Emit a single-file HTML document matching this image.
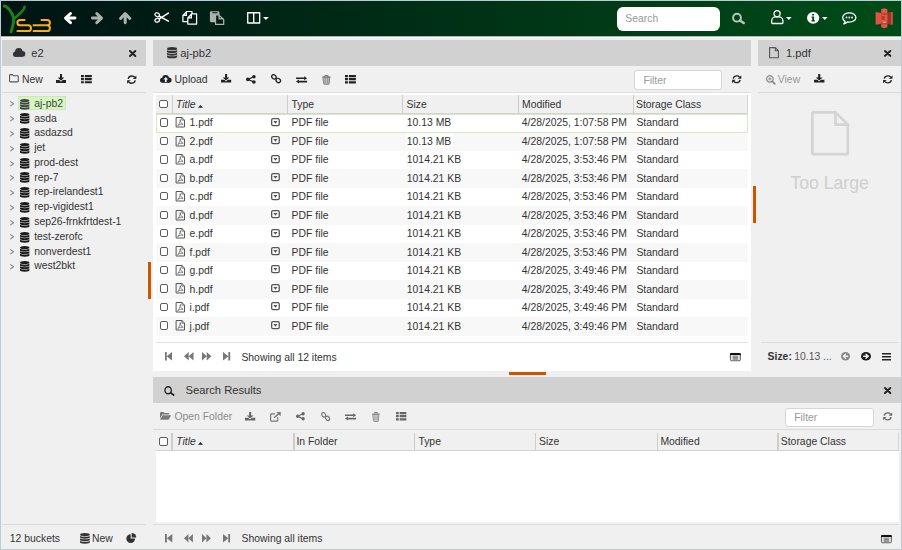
<!DOCTYPE html>
<html><head><meta charset="utf-8">
<style>
*{box-sizing:border-box;margin:0;padding:0}
html,body{width:902px;height:550px;overflow:hidden;background:#f0f0f0}
body{position:relative;font-family:"Liberation Sans",sans-serif;font-size:10.4px;color:#333}
.a{position:absolute}
.t{position:absolute;white-space:nowrap;line-height:12px}
svg{position:absolute;overflow:visible}
.cb{position:absolute;width:8.5px;height:8.4px;border:1px solid #5a5a5a;border-radius:2px;background:#fff}
</style></head><body>
<div class="a" style="left:1px;top:1px;width:900px;height:35px;background:linear-gradient(90deg,#001414 0%,#001614 6%,#001b14 16%,#002615 32%,#003a16 66%,#004c18 100%)"></div>
<div class="a" style="left:1px;top:36px;width:900px;height:1px;background:linear-gradient(90deg,#001414 0%,#001614 6%,#001b14 16%,#002615 32%,#003a16 66%,#004c18 100%);opacity:.3"></div>
<div class="a" style="left:1px;top:37px;width:900px;height:1px;background:#f8f8f8"></div>
<svg style="left:0px;top:0px;" width="52" height="34" viewBox="0 0 52 34" preserveAspectRatio="none" fill="#333" stroke="none"><path d="M4.3 6.1 C7.6 6.6 11.6 11.2 13.5 17.6 C14.3 21 12.6 27.2 11.1 31.8" fill="none" stroke="#188218" stroke-width="3.0" stroke-linecap="round" stroke-linejoin="round" /><path d="M24.6 6.8 C24.5 10.6 19.2 14.2 13.9 18.9" fill="none" stroke="#188218" stroke-width="2.6" stroke-linecap="round" stroke-linejoin="round" /><path d="M24.6 20 H20.2 C18.2 20 17.4 21 17.4 22.65 C17.4 24.3 18.2 25.3 20.2 25.3 H28.2 C30.2 25.3 31 26.3 31 28.2 C31 30.1 30.2 31.1 28.2 31.1 H17.4" fill="none" stroke="#f9ae1a" stroke-width="2.0" stroke-linecap="round" stroke-linejoin="round" /><path d="M41.5 20 H47.1 C49.1 20 49.9 21 49.9 22.65 C49.9 24.3 49.1 25.3 47.1 25.3 H33.5 M47.1 25.3 C49.1 25.3 49.9 26.3 49.9 28.2 C49.9 30.1 49.1 31.1 47.1 31.1 H33.5" fill="none" stroke="#f9ae1a" stroke-width="2.0" stroke-linecap="round" stroke-linejoin="round" /></svg>
<svg style="left:64.3px;top:11.8px;" width="12.4" height="12.2" viewBox="0 0 12 12" preserveAspectRatio="none" fill="#333" stroke="none"><path d="M6.3 1.5 L1.5 6 L6.3 10.5 M1.8 6 H10.6" fill="none" stroke="#ffffff" stroke-width="2.9" stroke-linecap="round" stroke-linejoin="round" /></svg>
<svg style="left:91.4px;top:11.8px;" width="12.1" height="12.2" viewBox="0 0 12 12" preserveAspectRatio="none" fill="#333" stroke="none"><path d="M5.7 1.5 L10.5 6 L5.7 10.5 M10.2 6 H1.4" fill="none" stroke="#aab3ae" stroke-width="2.9" stroke-linecap="round" stroke-linejoin="round" /></svg>
<svg style="left:118.9px;top:11.6px;" width="12.4" height="12.2" viewBox="0 0 12 12" preserveAspectRatio="none" fill="#333" stroke="none"><path d="M1.5 6.3 L6 1.5 L10.5 6.3 M6 1.8 V10.6" fill="none" stroke="#aab3ae" stroke-width="2.9" stroke-linecap="round" stroke-linejoin="round" /></svg>
<svg style="left:154.4px;top:12.2px;" width="14.8" height="10.8" viewBox="0 0 15 11" preserveAspectRatio="none" fill="#333" stroke="none"><ellipse cx="3.3" cy="2.8" rx="2.4" ry="1.9" transform="rotate(25 3.3 2.8)" fill="none" stroke="#ffffff" stroke-width="1.3"/><ellipse cx="3.3" cy="8.4" rx="2.4" ry="1.9" transform="rotate(-25 3.3 8.4)" fill="none" stroke="#ffffff" stroke-width="1.3"/><path d="M5.3 4.1 L14.6 9.4 M5.3 7.1 L14.6 1.1" fill="none" stroke="#ffffff" stroke-width="1.5" stroke-linecap="round" stroke-linejoin="round" /></svg>
<svg style="left:181.7px;top:10.5px;" width="15.2" height="13.2" viewBox="0 0 15.2 13.2" preserveAspectRatio="none" fill="#333" stroke="none"><path d="M0.9 4.5 L4.8 0.5 H10 V2.8 M0.9 4.5 V10.6 H5.8 M0.9 4.5 H4.4 V0.8" fill="none" stroke="#ffffff" stroke-width="1.25" stroke-linecap="round" stroke-linejoin="round" /><path d="M5.8 7 L9.8 2.8 H14.6 V13.1 H5.8 Z" fill="#001a10" /><path d="M5.8 7 L9.8 2.8 H14.6 V13.1 H5.8 Z M5.8 7 H9.4 V3.1" fill="none" stroke="#ffffff" stroke-width="1.25" stroke-linecap="round" stroke-linejoin="round" /></svg>
<svg style="left:209.0px;top:10.5px;" width="15.3" height="13.2" viewBox="0 0 15.2 13.2" preserveAspectRatio="none" fill="#333" stroke="none"><rect x="0.9" y="0.3" width="9.5" height="10.9" rx="1.1" fill="#aab3ae"/><rect x="3.2" y="1.3" width="5.3" height="1.0" rx="0.5" fill="#001b10"/><path d="M6.5 4 H9.6 L14.6 8.5 V13.5 H6.5 Z" fill="#001b10" /><path d="M6.5 4 H9.6 L14.6 8.5 V13.5 H6.5 Z M10 4.3 V7.9 H14.3" fill="none" stroke="#aab3ae" stroke-width="1.25" stroke-linecap="round" stroke-linejoin="round" /></svg>
<svg style="left:246.6px;top:11.5px;" width="13.4" height="11.7" viewBox="0 0 14 12" preserveAspectRatio="none" fill="#333" stroke="none"><path d="M0.75 0.75 H13.25 V11.25 H0.75 Z M7 0.75 V11.25" fill="none" stroke="#ffffff" stroke-width="1.4" stroke-linecap="butt" stroke-linejoin="round" /></svg>
<svg style="left:263.4px;top:16.9px;" width="5.8" height="2.9" viewBox="0 0 6 3.2" preserveAspectRatio="none" fill="#333" stroke="none"><path d="M0 0 H6 L3 3.2 Z" fill="#ffffff" /></svg>
<div class="a" style="left:617px;top:7px;width:103px;height:23.5px;background:#fff;border-radius:6px"></div>
<div class="t" style="left:625.3px;top:13.3px;color:#999;">Search</div>
<svg style="left:732.2px;top:13.3px;" width="12.8" height="10.8" viewBox="0 0 12.8 10.8" preserveAspectRatio="none" fill="#333" stroke="none"><circle cx="5" cy="4.7" r="3.9" fill="none" stroke="#b5c7ba" stroke-width="2.0"/><path d="M7.9 7.5 L11.7 10" fill="none" stroke="#b5c7ba" stroke-width="2.5" stroke-linecap="round" stroke-linejoin="round" /></svg>
<svg style="left:770.7px;top:10.2px;" width="12.9" height="14.2" viewBox="0 0 13 14.2" preserveAspectRatio="none" fill="#333" stroke="none"><circle cx="6.1" cy="3.7" r="3.1" fill="none" stroke="#ffffff" stroke-width="1.3"/><path d="M1.4 13.5 Q0.7 13.5 0.7 12.8 V10.9 C0.7 8.4 2.7 6.9 4.6 6.9 H7.8 C9.8 6.9 12 8.4 12 10.9 V12.8 Q12 13.5 11.3 13.5 Z" fill="none" stroke="#ffffff" stroke-width="1.3" stroke-linecap="round" stroke-linejoin="round" /></svg>
<svg style="left:786.2px;top:17.3px;" width="5.6" height="2.9" viewBox="0 0 6 3.2" preserveAspectRatio="none" fill="#333" stroke="none"><path d="M0 0 H6 L3 3.2 Z" fill="#ffffff" /></svg>
<svg style="left:806.5px;top:11.6px;" width="12.3" height="11.7" viewBox="0 0 12.6 11.8" preserveAspectRatio="none" fill="#333" stroke="none"><ellipse cx="6.3" cy="5.9" rx="6.3" ry="5.9" fill="#ffffff"/><path d="M5.3 1.9 H7.2 V3.6 H5.3 Z M4.6 4.6 H7.3 V8.4 H8.1 V9.7 H4.6 V8.4 H5.4 V5.9 H4.6 Z" fill="#004316" /></svg>
<svg style="left:822.4px;top:17.0px;" width="5.6" height="2.9" viewBox="0 0 6 3.2" preserveAspectRatio="none" fill="#333" stroke="none"><path d="M0 0 H6 L3 3.2 Z" fill="#ffffff" /></svg>
<svg style="left:842.2px;top:11.8px;" width="14.6" height="12.6" viewBox="0 0 14.6 12.6" preserveAspectRatio="none" fill="#333" stroke="none"><path d="M7.3 0.8 C11 0.8 13.9 2.9 13.9 5.5 C13.9 8.1 11 10.2 7.3 10.2 C6.6 10.2 6 10.1 5.4 10 C4.5 10.9 3.3 11.6 1.8 11.9 C2.5 11.1 2.9 10.3 3 9.4 C1.6 8.5 0.7 7.1 0.7 5.5 C0.7 2.9 3.6 0.8 7.3 0.8 Z" fill="none" stroke="#ffffff" stroke-width="1.3" stroke-linecap="round" stroke-linejoin="round" /><circle cx="4.5" cy="5.5" r="0.9" fill="#ffffff"/><circle cx="7.3" cy="5.5" r="0.9" fill="#ffffff"/><circle cx="10.1" cy="5.5" r="0.9" fill="#ffffff"/></svg>
<svg style="left:874.6px;top:8.2px;" width="18.4" height="20.6" viewBox="0 0 18.4 20.6" preserveAspectRatio="none" fill="#333" stroke="none"><path d="M0.6 3.9 L6.5 4.9 V15.7 L0.6 16.7 Z" fill="#e05243" /><path d="M17.8 3.9 L12.2 4.9 V15.7 L17.8 16.7 Z" fill="#e05243" /><path d="M12.2 4.9 L16.1 4.2 V16.4 L12.2 15.7 Z" fill="#9b3527" /><path d="M6.2 1.3 L9.3 0.2 L12.4 1.3 V19.3 L9.3 20.3 L6.2 19.3 Z" fill="#e35646" /><path d="M6.2 4.9 L9.3 5.5 L12.4 4.9 V6.5 L9.3 7.1 L6.2 6.5 Z" fill="#b5402f" /><path d="M6.9 8.2 H9.6 V11.6 H6.9 Z" fill="#a5392b" /><path d="M6.2 14.6 L9.3 14.0 L12.4 14.6 V15.9 L9.3 16.5 L6.2 15.9 Z" fill="#b5402f" /><path d="M7.0 14.3 L9.3 13.8 L11.6 14.3 L9.3 14.9 Z" fill="#f3cfc6" /></svg>
<div class="a" style="left:2px;top:40px;width:144px;height:26px;background:#d1d1d1;"></div>
<svg style="left:13.1px;top:48.0px;" width="12.3" height="8.9" viewBox="0 0 12.3 8.9" preserveAspectRatio="none" fill="#333" stroke="none"><circle cx="5.8" cy="3.9" r="3.8" fill="#333"/><circle cx="9.5" cy="5.9" r="2.8" fill="#333"/><circle cx="2.7" cy="6.2" r="2.7" fill="#333"/><path d="M2.7 4.5 H9.5 V8.9 H2.7 Z" fill="#333" /></svg>
<div class="t" style="left:31.3px;top:47px;font-size:11.2px;line-height:12px;">e2</div>
<svg style="left:128.5px;top:50.0px;" width="7.3" height="7.0" viewBox="0 0 7.3 7" preserveAspectRatio="none" fill="#333" stroke="none"><path d="M1 1 L6.3 6 M6.3 1 L1 6" fill="none" stroke="#222" stroke-width="2.0" stroke-linecap="round" stroke-linejoin="round" /></svg>
<svg style="left:9.2px;top:74.4px;" width="9.9" height="8.5" viewBox="0 0 10 8.5" preserveAspectRatio="none" fill="#333" stroke="none"><path d="M0.6 1.4 Q0.6 0.6 1.4 0.6 H3.6 L4.6 1.8 H8.6 Q9.4 1.8 9.4 2.6 V7.1 Q9.4 7.9 8.6 7.9 H1.4 Q0.6 7.9 0.6 7.1 Z" fill="none" stroke="#555" stroke-width="1.1" stroke-linecap="round" stroke-linejoin="round" /></svg>
<div class="t" style="left:22.0px;top:74px;">New</div>
<svg style="left:56.1px;top:74.0px;" width="10.0" height="8.9" viewBox="0 0 10 9" preserveAspectRatio="none" fill="#333" stroke="none"><path d="M4 0 H6 V3.6 H8.3 L5 6.9 L1.7 3.6 H4 Z" fill="#222" /><path d="M0 6.1 H3.2 L5 7.9 L6.8 6.1 H10 V9 H0 Z" fill="#222" /></svg>
<svg style="left:81.0px;top:74.5px;" width="10.8" height="8.3" viewBox="0 0 11 8.5" preserveAspectRatio="none" fill="#333" stroke="none"><path d="M0 0 H2.9 V2.2 H0 Z M3.9 0 H11 V2.2 H3.9 Z" fill="#222" /><path d="M0 3.15 H2.9 V5.35 H0 Z M3.9 3.15 H11 V5.35 H3.9 Z" fill="#222" /><path d="M0 6.3 H2.9 V8.5 H0 Z M3.9 6.3 H11 V8.5 H3.9 Z" fill="#222" /></svg>
<svg style="left:127.0px;top:74.6px;" width="9.5" height="9.2" viewBox="0 0 9.6 9.4" preserveAspectRatio="none" fill="#333" stroke="none"><path d="M1.2 3.9 C1.7 2.1 3.2 1.0 4.9 1.0 C6.1 1.0 7.1 1.5 7.8 2.3" fill="none" stroke="#222" stroke-width="1.4" stroke-linecap="butt" stroke-linejoin="round" /><path d="M9.5 0.5 V4.1 H5.9 Z" fill="#222" /><path d="M8.4 5.5 C7.9 7.3 6.4 8.4 4.7 8.4 C3.5 8.4 2.5 7.9 1.8 7.1" fill="none" stroke="#222" stroke-width="1.4" stroke-linecap="butt" stroke-linejoin="round" /><path d="M0.1 8.9 V5.3 H3.7 Z" fill="#222" /></svg>
<div class="a" style="left:2px;top:91.5px;width:144px;height:1.5px;background:#dadada;"></div>
<div class="a" style="left:18.2px;top:96.0px;width:47.6px;height:14.2px;background:#d5f6c1;border:1px solid #c9eab5"></div>
<svg style="left:9.8px;top:101.39999999999999px;" width="4.2" height="5.5" viewBox="0 0 4.2 5.3" preserveAspectRatio="none" fill="#333" stroke="none"><path d="M0.6 0.6 L3.6 2.65 L0.6 4.7" fill="none" stroke="#888" stroke-width="1.1" stroke-linecap="round" stroke-linejoin="round" /></svg>
<svg style="left:19.7px;top:98.5px;" width="9.4" height="10.6" viewBox="0 0 10 11.0" preserveAspectRatio="none" fill="#333" stroke="none"><ellipse cx="5" cy="1.65" rx="5" ry="1.65" fill="#444"/><path d="M0 2.45 A5 1.5 0 0 0 10 2.45 V4.40 A5 1.5 0 0 1 0 4.40 Z" fill="#444" /><path d="M0 5.05 A5 1.5 0 0 0 10 5.05 V7.00 A5 1.5 0 0 1 0 7.00 Z" fill="#444" /><path d="M0 7.65 A5 1.5 0 0 0 10 7.65 V9.60 A5 1.5 0 0 1 0 9.60 Z" fill="#444" /></svg>
<div class="t" style="left:34.2px;top:98px;color:#444;">aj-pb2</div>
<svg style="left:9.8px;top:116.17999999999999px;" width="4.2" height="5.5" viewBox="0 0 4.2 5.3" preserveAspectRatio="none" fill="#333" stroke="none"><path d="M0.6 0.6 L3.6 2.65 L0.6 4.7" fill="none" stroke="#888" stroke-width="1.1" stroke-linecap="round" stroke-linejoin="round" /></svg>
<svg style="left:19.7px;top:113.28px;" width="9.4" height="10.6" viewBox="0 0 10 11.0" preserveAspectRatio="none" fill="#333" stroke="none"><ellipse cx="5" cy="1.65" rx="5" ry="1.65" fill="#1a1a1a"/><path d="M0 2.45 A5 1.5 0 0 0 10 2.45 V4.40 A5 1.5 0 0 1 0 4.40 Z" fill="#1a1a1a" /><path d="M0 5.05 A5 1.5 0 0 0 10 5.05 V7.00 A5 1.5 0 0 1 0 7.00 Z" fill="#1a1a1a" /><path d="M0 7.65 A5 1.5 0 0 0 10 7.65 V9.60 A5 1.5 0 0 1 0 9.60 Z" fill="#1a1a1a" /></svg>
<div class="t" style="left:34.2px;top:113px;color:#333;">asda</div>
<svg style="left:9.8px;top:130.95999999999998px;" width="4.2" height="5.5" viewBox="0 0 4.2 5.3" preserveAspectRatio="none" fill="#333" stroke="none"><path d="M0.6 0.6 L3.6 2.65 L0.6 4.7" fill="none" stroke="#888" stroke-width="1.1" stroke-linecap="round" stroke-linejoin="round" /></svg>
<svg style="left:19.7px;top:128.05999999999997px;" width="9.4" height="10.6" viewBox="0 0 10 11.0" preserveAspectRatio="none" fill="#333" stroke="none"><ellipse cx="5" cy="1.65" rx="5" ry="1.65" fill="#1a1a1a"/><path d="M0 2.45 A5 1.5 0 0 0 10 2.45 V4.40 A5 1.5 0 0 1 0 4.40 Z" fill="#1a1a1a" /><path d="M0 5.05 A5 1.5 0 0 0 10 5.05 V7.00 A5 1.5 0 0 1 0 7.00 Z" fill="#1a1a1a" /><path d="M0 7.65 A5 1.5 0 0 0 10 7.65 V9.60 A5 1.5 0 0 1 0 9.60 Z" fill="#1a1a1a" /></svg>
<div class="t" style="left:34.2px;top:127px;color:#333;">asdazsd</div>
<svg style="left:9.8px;top:145.73999999999998px;" width="4.2" height="5.5" viewBox="0 0 4.2 5.3" preserveAspectRatio="none" fill="#333" stroke="none"><path d="M0.6 0.6 L3.6 2.65 L0.6 4.7" fill="none" stroke="#888" stroke-width="1.1" stroke-linecap="round" stroke-linejoin="round" /></svg>
<svg style="left:19.7px;top:142.83999999999997px;" width="9.4" height="10.6" viewBox="0 0 10 11.0" preserveAspectRatio="none" fill="#333" stroke="none"><ellipse cx="5" cy="1.65" rx="5" ry="1.65" fill="#1a1a1a"/><path d="M0 2.45 A5 1.5 0 0 0 10 2.45 V4.40 A5 1.5 0 0 1 0 4.40 Z" fill="#1a1a1a" /><path d="M0 5.05 A5 1.5 0 0 0 10 5.05 V7.00 A5 1.5 0 0 1 0 7.00 Z" fill="#1a1a1a" /><path d="M0 7.65 A5 1.5 0 0 0 10 7.65 V9.60 A5 1.5 0 0 1 0 9.60 Z" fill="#1a1a1a" /></svg>
<div class="t" style="left:34.2px;top:142px;color:#333;">jet</div>
<svg style="left:9.8px;top:160.51999999999998px;" width="4.2" height="5.5" viewBox="0 0 4.2 5.3" preserveAspectRatio="none" fill="#333" stroke="none"><path d="M0.6 0.6 L3.6 2.65 L0.6 4.7" fill="none" stroke="#888" stroke-width="1.1" stroke-linecap="round" stroke-linejoin="round" /></svg>
<svg style="left:19.7px;top:157.61999999999998px;" width="9.4" height="10.6" viewBox="0 0 10 11.0" preserveAspectRatio="none" fill="#333" stroke="none"><ellipse cx="5" cy="1.65" rx="5" ry="1.65" fill="#1a1a1a"/><path d="M0 2.45 A5 1.5 0 0 0 10 2.45 V4.40 A5 1.5 0 0 1 0 4.40 Z" fill="#1a1a1a" /><path d="M0 5.05 A5 1.5 0 0 0 10 5.05 V7.00 A5 1.5 0 0 1 0 7.00 Z" fill="#1a1a1a" /><path d="M0 7.65 A5 1.5 0 0 0 10 7.65 V9.60 A5 1.5 0 0 1 0 9.60 Z" fill="#1a1a1a" /></svg>
<div class="t" style="left:34.2px;top:157px;color:#333;">prod-dest</div>
<svg style="left:9.8px;top:175.29999999999998px;" width="4.2" height="5.5" viewBox="0 0 4.2 5.3" preserveAspectRatio="none" fill="#333" stroke="none"><path d="M0.6 0.6 L3.6 2.65 L0.6 4.7" fill="none" stroke="#888" stroke-width="1.1" stroke-linecap="round" stroke-linejoin="round" /></svg>
<svg style="left:19.7px;top:172.39999999999998px;" width="9.4" height="10.6" viewBox="0 0 10 11.0" preserveAspectRatio="none" fill="#333" stroke="none"><ellipse cx="5" cy="1.65" rx="5" ry="1.65" fill="#1a1a1a"/><path d="M0 2.45 A5 1.5 0 0 0 10 2.45 V4.40 A5 1.5 0 0 1 0 4.40 Z" fill="#1a1a1a" /><path d="M0 5.05 A5 1.5 0 0 0 10 5.05 V7.00 A5 1.5 0 0 1 0 7.00 Z" fill="#1a1a1a" /><path d="M0 7.65 A5 1.5 0 0 0 10 7.65 V9.60 A5 1.5 0 0 1 0 9.60 Z" fill="#1a1a1a" /></svg>
<div class="t" style="left:34.2px;top:172px;color:#333;">rep-7</div>
<svg style="left:9.8px;top:190.07999999999998px;" width="4.2" height="5.5" viewBox="0 0 4.2 5.3" preserveAspectRatio="none" fill="#333" stroke="none"><path d="M0.6 0.6 L3.6 2.65 L0.6 4.7" fill="none" stroke="#888" stroke-width="1.1" stroke-linecap="round" stroke-linejoin="round" /></svg>
<svg style="left:19.7px;top:187.17999999999998px;" width="9.4" height="10.6" viewBox="0 0 10 11.0" preserveAspectRatio="none" fill="#333" stroke="none"><ellipse cx="5" cy="1.65" rx="5" ry="1.65" fill="#1a1a1a"/><path d="M0 2.45 A5 1.5 0 0 0 10 2.45 V4.40 A5 1.5 0 0 1 0 4.40 Z" fill="#1a1a1a" /><path d="M0 5.05 A5 1.5 0 0 0 10 5.05 V7.00 A5 1.5 0 0 1 0 7.00 Z" fill="#1a1a1a" /><path d="M0 7.65 A5 1.5 0 0 0 10 7.65 V9.60 A5 1.5 0 0 1 0 9.60 Z" fill="#1a1a1a" /></svg>
<div class="t" style="left:34.2px;top:186px;color:#333;">rep-irelandest1</div>
<svg style="left:9.8px;top:204.85999999999999px;" width="4.2" height="5.5" viewBox="0 0 4.2 5.3" preserveAspectRatio="none" fill="#333" stroke="none"><path d="M0.6 0.6 L3.6 2.65 L0.6 4.7" fill="none" stroke="#888" stroke-width="1.1" stroke-linecap="round" stroke-linejoin="round" /></svg>
<svg style="left:19.7px;top:201.95999999999998px;" width="9.4" height="10.6" viewBox="0 0 10 11.0" preserveAspectRatio="none" fill="#333" stroke="none"><ellipse cx="5" cy="1.65" rx="5" ry="1.65" fill="#1a1a1a"/><path d="M0 2.45 A5 1.5 0 0 0 10 2.45 V4.40 A5 1.5 0 0 1 0 4.40 Z" fill="#1a1a1a" /><path d="M0 5.05 A5 1.5 0 0 0 10 5.05 V7.00 A5 1.5 0 0 1 0 7.00 Z" fill="#1a1a1a" /><path d="M0 7.65 A5 1.5 0 0 0 10 7.65 V9.60 A5 1.5 0 0 1 0 9.60 Z" fill="#1a1a1a" /></svg>
<div class="t" style="left:34.2px;top:201px;color:#333;">rep-vigidest1</div>
<svg style="left:9.8px;top:219.64px;" width="4.2" height="5.5" viewBox="0 0 4.2 5.3" preserveAspectRatio="none" fill="#333" stroke="none"><path d="M0.6 0.6 L3.6 2.65 L0.6 4.7" fill="none" stroke="#888" stroke-width="1.1" stroke-linecap="round" stroke-linejoin="round" /></svg>
<svg style="left:19.7px;top:216.73999999999998px;" width="9.4" height="10.6" viewBox="0 0 10 11.0" preserveAspectRatio="none" fill="#333" stroke="none"><ellipse cx="5" cy="1.65" rx="5" ry="1.65" fill="#1a1a1a"/><path d="M0 2.45 A5 1.5 0 0 0 10 2.45 V4.40 A5 1.5 0 0 1 0 4.40 Z" fill="#1a1a1a" /><path d="M0 5.05 A5 1.5 0 0 0 10 5.05 V7.00 A5 1.5 0 0 1 0 7.00 Z" fill="#1a1a1a" /><path d="M0 7.65 A5 1.5 0 0 0 10 7.65 V9.60 A5 1.5 0 0 1 0 9.60 Z" fill="#1a1a1a" /></svg>
<div class="t" style="left:34.2px;top:216px;color:#333;">sep26-frnkfrtdest-1</div>
<svg style="left:9.8px;top:234.42px;" width="4.2" height="5.5" viewBox="0 0 4.2 5.3" preserveAspectRatio="none" fill="#333" stroke="none"><path d="M0.6 0.6 L3.6 2.65 L0.6 4.7" fill="none" stroke="#888" stroke-width="1.1" stroke-linecap="round" stroke-linejoin="round" /></svg>
<svg style="left:19.7px;top:231.51999999999998px;" width="9.4" height="10.6" viewBox="0 0 10 11.0" preserveAspectRatio="none" fill="#333" stroke="none"><ellipse cx="5" cy="1.65" rx="5" ry="1.65" fill="#1a1a1a"/><path d="M0 2.45 A5 1.5 0 0 0 10 2.45 V4.40 A5 1.5 0 0 1 0 4.40 Z" fill="#1a1a1a" /><path d="M0 5.05 A5 1.5 0 0 0 10 5.05 V7.00 A5 1.5 0 0 1 0 7.00 Z" fill="#1a1a1a" /><path d="M0 7.65 A5 1.5 0 0 0 10 7.65 V9.60 A5 1.5 0 0 1 0 9.60 Z" fill="#1a1a1a" /></svg>
<div class="t" style="left:34.2px;top:231px;color:#333;">test-zerofc</div>
<svg style="left:9.8px;top:249.19999999999996px;" width="4.2" height="5.5" viewBox="0 0 4.2 5.3" preserveAspectRatio="none" fill="#333" stroke="none"><path d="M0.6 0.6 L3.6 2.65 L0.6 4.7" fill="none" stroke="#888" stroke-width="1.1" stroke-linecap="round" stroke-linejoin="round" /></svg>
<svg style="left:19.7px;top:246.29999999999995px;" width="9.4" height="10.6" viewBox="0 0 10 11.0" preserveAspectRatio="none" fill="#333" stroke="none"><ellipse cx="5" cy="1.65" rx="5" ry="1.65" fill="#1a1a1a"/><path d="M0 2.45 A5 1.5 0 0 0 10 2.45 V4.40 A5 1.5 0 0 1 0 4.40 Z" fill="#1a1a1a" /><path d="M0 5.05 A5 1.5 0 0 0 10 5.05 V7.00 A5 1.5 0 0 1 0 7.00 Z" fill="#1a1a1a" /><path d="M0 7.65 A5 1.5 0 0 0 10 7.65 V9.60 A5 1.5 0 0 1 0 9.60 Z" fill="#1a1a1a" /></svg>
<div class="t" style="left:34.2px;top:246px;color:#333;">nonverdest1</div>
<svg style="left:9.8px;top:263.98px;" width="4.2" height="5.5" viewBox="0 0 4.2 5.3" preserveAspectRatio="none" fill="#333" stroke="none"><path d="M0.6 0.6 L3.6 2.65 L0.6 4.7" fill="none" stroke="#888" stroke-width="1.1" stroke-linecap="round" stroke-linejoin="round" /></svg>
<svg style="left:19.7px;top:261.08px;" width="9.4" height="10.6" viewBox="0 0 10 11.0" preserveAspectRatio="none" fill="#333" stroke="none"><ellipse cx="5" cy="1.65" rx="5" ry="1.65" fill="#1a1a1a"/><path d="M0 2.45 A5 1.5 0 0 0 10 2.45 V4.40 A5 1.5 0 0 1 0 4.40 Z" fill="#1a1a1a" /><path d="M0 5.05 A5 1.5 0 0 0 10 5.05 V7.00 A5 1.5 0 0 1 0 7.00 Z" fill="#1a1a1a" /><path d="M0 7.65 A5 1.5 0 0 0 10 7.65 V9.60 A5 1.5 0 0 1 0 9.60 Z" fill="#1a1a1a" /></svg>
<div class="t" style="left:34.2px;top:260px;color:#333;">west2bkt</div>
<div class="a" style="left:2px;top:523.5px;width:144px;height:1.5px;background:#dadada;"></div>
<div class="t" style="left:9.8px;top:533px;">12 buckets</div>
<svg style="left:79.8px;top:532.8px;" width="9.8" height="10.7" viewBox="0 0 10 11.0" preserveAspectRatio="none" fill="#333" stroke="none"><ellipse cx="5" cy="1.65" rx="5" ry="1.65" fill="#333"/><path d="M0 2.45 A5 1.5 0 0 0 10 2.45 V4.40 A5 1.5 0 0 1 0 4.40 Z" fill="#333" /><path d="M0 5.05 A5 1.5 0 0 0 10 5.05 V7.00 A5 1.5 0 0 1 0 7.00 Z" fill="#333" /><path d="M0 7.65 A5 1.5 0 0 0 10 7.65 V9.60 A5 1.5 0 0 1 0 9.60 Z" fill="#333" /></svg>
<div class="t" style="left:92.0px;top:533px;">New</div>
<svg style="left:126.3px;top:532.6px;" width="10.6" height="10.0" viewBox="0 0 10.6 10" preserveAspectRatio="none" fill="#333" stroke="none"><path d="M4.7 1.2 A4.4 4.4 0 1 0 9.1 5.6 H4.7 Z" fill="#333" /><path d="M5.7 0 A4.6 4.6 0 0 1 10.3 4.6 H5.7 Z" fill="#333" /></svg>
<div class="a" style="left:147.9px;top:261.8px;width:3.2px;height:37.1px;background:#cc5600;"></div>
<div class="a" style="left:752.7px;top:185.9px;width:3.5px;height:37.3px;background:#cc5600;"></div>
<div class="a" style="left:508.6px;top:371.9px;width:37.3px;height:3.1px;background:#cc5600;"></div>
<div class="a" style="left:153px;top:40px;width:598px;height:26px;background:#d1d1d1;"></div>
<svg style="left:166.9px;top:47.3px;" width="10.1" height="11.2" viewBox="0 0 10 11.0" preserveAspectRatio="none" fill="#333" stroke="none"><ellipse cx="5" cy="1.65" rx="5" ry="1.65" fill="#333"/><path d="M0 2.45 A5 1.5 0 0 0 10 2.45 V4.40 A5 1.5 0 0 1 0 4.40 Z" fill="#333" /><path d="M0 5.05 A5 1.5 0 0 0 10 5.05 V7.00 A5 1.5 0 0 1 0 7.00 Z" fill="#333" /><path d="M0 7.65 A5 1.5 0 0 0 10 7.65 V9.60 A5 1.5 0 0 1 0 9.60 Z" fill="#333" /></svg>
<div class="t" style="left:180.2px;top:47px;font-size:11.2px;line-height:12px;">aj-pb2</div>
<svg style="left:160.2px;top:74.6px;" width="11.6" height="7.8" viewBox="0 0 11.6 7.8" preserveAspectRatio="none" fill="#333" stroke="none"><circle cx="5.6" cy="3.4" r="3.4" fill="#222"/><circle cx="8.9" cy="5.1" r="2.7" fill="#222"/><circle cx="2.5" cy="5.3" r="2.5" fill="#222"/><path d="M2.5 3.5 H8.9 V7.8 H2.5 Z" fill="#222" /><path d="M5.8 1.9 L8.2 4.4 H6.7 V6.9 H4.9 V4.4 H3.4 Z" fill="#f0f0f0" /></svg>
<div class="t" style="left:174.6px;top:74px;">Upload</div>
<svg style="left:221.0px;top:74.2px;" width="10.2" height="8.6" viewBox="0 0 10 9" preserveAspectRatio="none" fill="#333" stroke="none"><path d="M4 0 H6 V3.6 H8.3 L5 6.9 L1.7 3.6 H4 Z" fill="#222" /><path d="M0 6.1 H3.2 L5 7.9 L6.8 6.1 H10 V9 H0 Z" fill="#222" /></svg>
<svg style="left:245.9px;top:74.6px;" width="9.7" height="8.8" viewBox="0 0 9.7 8.9" preserveAspectRatio="none" fill="#333" stroke="none"><circle cx="1.8" cy="4.45" r="1.8" fill="#222"/><circle cx="7.9" cy="1.8" r="1.8" fill="#222"/><circle cx="7.9" cy="7.1" r="1.8" fill="#222"/><path d="M1.8 4.45 L7.9 1.8 M1.8 4.45 L7.9 7.1" fill="none" stroke="#222" stroke-width="1.2" stroke-linecap="round" stroke-linejoin="round" /></svg>
<svg style="left:271.0px;top:74.2px;" width="10.2" height="9.3" viewBox="0 0 10.1 9.2" preserveAspectRatio="none" fill="#333" stroke="none"><ellipse cx="2.9" cy="2.8" rx="2.4" ry="1.95" transform="rotate(42 2.9 2.8)" fill="none" stroke="#222" stroke-width="1.25"/><ellipse cx="7.2" cy="6.4" rx="2.4" ry="1.95" transform="rotate(42 7.2 6.4)" fill="none" stroke="#222" stroke-width="1.25"/></svg>
<svg style="left:295.5px;top:75.5px;" width="11.1" height="7.6" viewBox="0 0 11.1 7.6" preserveAspectRatio="none" fill="#333" stroke="none"><path d="M0 1.5 H8.2 V0.2 L11.1 2.25 L8.2 4.3 V3.1 H0 Z" fill="#222" /><path d="M11.1 4.8 H2.9 V3.5 L0 5.55 L2.9 7.6 V6.4 H11.1 Z" fill="#222" /></svg>
<svg style="left:321.5px;top:74.5px;" width="8.9" height="9.3" viewBox="0 0 8.9 9.6" preserveAspectRatio="none" fill="#333" stroke="none"><path d="M1.2 2.4 H7.7 L7.2 9.0 Q7.15 9.6 6.6 9.6 H2.3 Q1.75 9.6 1.7 9.0 Z" fill="#bdbdbd" /><path d="M1.2 2.4 H7.7 L7.2 9.0 Q7.15 9.6 6.6 9.6 H2.3 Q1.75 9.6 1.7 9.0 Z" fill="none" stroke="#777" stroke-width="0.9" stroke-linecap="round" stroke-linejoin="round" /><path d="M0.2 2.0 H8.7 M3.0 2.0 V0.6 H5.9 V2.0" fill="none" stroke="#777" stroke-width="1.1" stroke-linecap="butt" stroke-linejoin="round" /><path d="M3.2 3.6 V8.2 M5.7 3.6 V8.2" fill="none" stroke="#777" stroke-width="0.7" stroke-linecap="round" stroke-linejoin="round" /></svg>
<svg style="left:345.4px;top:74.6px;" width="10.9" height="8.4" viewBox="0 0 11 8.5" preserveAspectRatio="none" fill="#333" stroke="none"><path d="M0 0 H2.9 V2.2 H0 Z M3.9 0 H11 V2.2 H3.9 Z" fill="#222" /><path d="M0 3.15 H2.9 V5.35 H0 Z M3.9 3.15 H11 V5.35 H3.9 Z" fill="#222" /><path d="M0 6.3 H2.9 V8.5 H0 Z M3.9 6.3 H11 V8.5 H3.9 Z" fill="#222" /></svg>
<div class="a" style="left:634.2px;top:70.3px;width:88px;height:19.3px;background:#fff;border:1.2px solid #d6d6d6;border-radius:3px"></div>
<div class="t" style="left:643.4px;top:75px;color:#999;">Filter</div>
<svg style="left:731.8px;top:74.8px;" width="9.4" height="8.6" viewBox="0 0 9.6 9.4" preserveAspectRatio="none" fill="#333" stroke="none"><path d="M1.2 3.9 C1.7 2.1 3.2 1.0 4.9 1.0 C6.1 1.0 7.1 1.5 7.8 2.3" fill="none" stroke="#222" stroke-width="1.4" stroke-linecap="butt" stroke-linejoin="round" /><path d="M9.5 0.5 V4.1 H5.9 Z" fill="#222" /><path d="M8.4 5.5 C7.9 7.3 6.4 8.4 4.7 8.4 C3.5 8.4 2.5 7.9 1.8 7.1" fill="none" stroke="#222" stroke-width="1.4" stroke-linecap="butt" stroke-linejoin="round" /><path d="M0.1 8.9 V5.3 H3.7 Z" fill="#222" /></svg>
<div class="a" style="left:153px;top:91.5px;width:598px;height:1.0px;background:#e0e0e0;"></div>
<div class="a" style="left:153px;top:92.5px;width:598px;height:278.0px;background:#fff;"></div>
<div class="a" style="left:156px;top:95px;width:592px;height:18px;background:#f0f0f0;"></div>
<div class="a" style="left:156px;top:112.5px;width:592px;height:1.0px;background:#d2d2d2;"></div>
<div class="a" style="left:171.5px;top:95.3px;width:1.2px;height:17.7px;background:#cdcdcd;"></div>
<div class="a" style="left:287.3px;top:95.3px;width:1.2px;height:17.7px;background:#cdcdcd;"></div>
<div class="a" style="left:402.2px;top:95.3px;width:1.2px;height:17.7px;background:#cdcdcd;"></div>
<div class="a" style="left:518.3px;top:95.3px;width:1.2px;height:17.7px;background:#cdcdcd;"></div>
<div class="a" style="left:632.5px;top:95.3px;width:1.2px;height:17.7px;background:#cdcdcd;"></div>
<div class="a" style="left:747px;top:95px;width:1px;height:18px;background:#d5d5d5;"></div>
<div class="a cb" style="left:159px;top:100px"></div>
<div class="t" style="left:176.0px;top:99px;"><i>Title</i></div>
<svg style="left:198.0px;top:104.7px;" width="5.0" height="2.8" viewBox="0 0 5 3" preserveAspectRatio="none" fill="#333" stroke="none"><path d="M0 3 L2.5 0 L5 3 Z" fill="#222" /></svg>
<div class="t" style="left:291.6px;top:99px;">Type</div>
<div class="t" style="left:406.6px;top:99px;">Size</div>
<div class="t" style="left:522.0px;top:99px;">Modified</div>
<div class="t" style="left:636.0px;top:99px;">Storage Class</div>
<div class="a cb" style="left:159.5px;top:118.2px"></div>
<svg style="left:176.1px;top:117.2px;" width="9.0" height="10.5" viewBox="0 0 9 10.5" preserveAspectRatio="none" fill="#333" stroke="none"><path d="M0.5 0.5 H5.9 L8.5 3.1 V10 H0.5 Z" fill="none" stroke="#555" stroke-width="1.0" stroke-linecap="round" stroke-linejoin="miter" /><path d="M5.9 0.5 V3.1 H8.5" fill="none" stroke="#555" stroke-width="0.8" stroke-linecap="round" stroke-linejoin="round" /><path d="M1.9 8.6 C3 7.3 4.1 5.3 4.3 2.6 C4.5 5 5.3 6.5 7.1 7.4 C5.5 7.0 3.9 7.3 2.3 8.0" fill="none" stroke="#555" stroke-width="0.7" stroke-linecap="round" stroke-linejoin="round" /></svg>
<div class="t" style="left:189.6px;top:117px;">1.pdf</div>
<svg style="left:270.6px;top:117.7px;" width="8.9" height="8.2" viewBox="0 0 8.9 8.2" preserveAspectRatio="none" fill="#333" stroke="none"><rect x="0.65" y="0.65" width="7.6" height="6.9" rx="1.4" fill="none" stroke="#555" stroke-width="1.3"/><path d="M2.4 2.9 H6.5 L4.45 5.7 Z" fill="#555" /></svg>
<div class="t" style="left:291.6px;top:117px;">PDF file</div>
<div class="t" style="left:406.8px;top:117px;">10.13 MB</div>
<div class="t" style="left:521.8px;top:117px;">4/28/2025, 1:07:58 PM</div>
<div class="t" style="left:636.4px;top:117px;">Standard</div>
<div class="a" style="left:156px;top:132.47px;width:592px;height:18.47px;background:#f8f8f8;"></div>
<div class="a cb" style="left:159.5px;top:136.67px"></div>
<svg style="left:176.1px;top:135.67px;" width="9.0" height="10.5" viewBox="0 0 9 10.5" preserveAspectRatio="none" fill="#333" stroke="none"><path d="M0.5 0.5 H5.9 L8.5 3.1 V10 H0.5 Z" fill="none" stroke="#555" stroke-width="1.0" stroke-linecap="round" stroke-linejoin="miter" /><path d="M5.9 0.5 V3.1 H8.5" fill="none" stroke="#555" stroke-width="0.8" stroke-linecap="round" stroke-linejoin="round" /><path d="M1.9 8.6 C3 7.3 4.1 5.3 4.3 2.6 C4.5 5 5.3 6.5 7.1 7.4 C5.5 7.0 3.9 7.3 2.3 8.0" fill="none" stroke="#555" stroke-width="0.7" stroke-linecap="round" stroke-linejoin="round" /></svg>
<div class="t" style="left:189.6px;top:136px;">2.pdf</div>
<svg style="left:270.6px;top:136.17px;" width="8.9" height="8.2" viewBox="0 0 8.9 8.2" preserveAspectRatio="none" fill="#333" stroke="none"><rect x="0.65" y="0.65" width="7.6" height="6.9" rx="1.4" fill="none" stroke="#555" stroke-width="1.3"/><path d="M2.4 2.9 H6.5 L4.45 5.7 Z" fill="#555" /></svg>
<div class="t" style="left:291.6px;top:136px;">PDF file</div>
<div class="a" style="left:406px;top:134.47px;width:47px;height:14.0px;background:#fff;"></div>
<div class="t" style="left:406.8px;top:136px;">10.13 MB</div>
<div class="t" style="left:521.8px;top:136px;">4/28/2025, 1:07:58 PM</div>
<div class="t" style="left:636.4px;top:136px;">Standard</div>
<div class="a cb" style="left:159.5px;top:155.14px"></div>
<svg style="left:176.1px;top:154.14px;" width="9.0" height="10.5" viewBox="0 0 9 10.5" preserveAspectRatio="none" fill="#333" stroke="none"><path d="M0.5 0.5 H5.9 L8.5 3.1 V10 H0.5 Z" fill="none" stroke="#555" stroke-width="1.0" stroke-linecap="round" stroke-linejoin="miter" /><path d="M5.9 0.5 V3.1 H8.5" fill="none" stroke="#555" stroke-width="0.8" stroke-linecap="round" stroke-linejoin="round" /><path d="M1.9 8.6 C3 7.3 4.1 5.3 4.3 2.6 C4.5 5 5.3 6.5 7.1 7.4 C5.5 7.0 3.9 7.3 2.3 8.0" fill="none" stroke="#555" stroke-width="0.7" stroke-linecap="round" stroke-linejoin="round" /></svg>
<div class="t" style="left:189.6px;top:154px;">a.pdf</div>
<svg style="left:270.6px;top:154.64px;" width="8.9" height="8.2" viewBox="0 0 8.9 8.2" preserveAspectRatio="none" fill="#333" stroke="none"><rect x="0.65" y="0.65" width="7.6" height="6.9" rx="1.4" fill="none" stroke="#555" stroke-width="1.3"/><path d="M2.4 2.9 H6.5 L4.45 5.7 Z" fill="#555" /></svg>
<div class="t" style="left:291.6px;top:154px;">PDF file</div>
<div class="t" style="left:406.8px;top:154px;">1014.21 KB</div>
<div class="t" style="left:521.8px;top:154px;">4/28/2025, 3:53:46 PM</div>
<div class="t" style="left:636.4px;top:154px;">Standard</div>
<div class="a" style="left:156px;top:169.41px;width:592px;height:18.47px;background:#f8f8f8;"></div>
<div class="a cb" style="left:159.5px;top:173.61px"></div>
<svg style="left:176.1px;top:172.60999999999999px;" width="9.0" height="10.5" viewBox="0 0 9 10.5" preserveAspectRatio="none" fill="#333" stroke="none"><path d="M0.5 0.5 H5.9 L8.5 3.1 V10 H0.5 Z" fill="none" stroke="#555" stroke-width="1.0" stroke-linecap="round" stroke-linejoin="miter" /><path d="M5.9 0.5 V3.1 H8.5" fill="none" stroke="#555" stroke-width="0.8" stroke-linecap="round" stroke-linejoin="round" /><path d="M1.9 8.6 C3 7.3 4.1 5.3 4.3 2.6 C4.5 5 5.3 6.5 7.1 7.4 C5.5 7.0 3.9 7.3 2.3 8.0" fill="none" stroke="#555" stroke-width="0.7" stroke-linecap="round" stroke-linejoin="round" /></svg>
<div class="t" style="left:189.6px;top:173px;">b.pdf</div>
<svg style="left:270.6px;top:173.10999999999999px;" width="8.9" height="8.2" viewBox="0 0 8.9 8.2" preserveAspectRatio="none" fill="#333" stroke="none"><rect x="0.65" y="0.65" width="7.6" height="6.9" rx="1.4" fill="none" stroke="#555" stroke-width="1.3"/><path d="M2.4 2.9 H6.5 L4.45 5.7 Z" fill="#555" /></svg>
<div class="t" style="left:291.6px;top:173px;">PDF file</div>
<div class="t" style="left:406.8px;top:173px;">1014.21 KB</div>
<div class="t" style="left:521.8px;top:173px;">4/28/2025, 3:53:46 PM</div>
<div class="t" style="left:636.4px;top:173px;">Standard</div>
<div class="a cb" style="left:159.5px;top:192.08px"></div>
<svg style="left:176.1px;top:191.07999999999998px;" width="9.0" height="10.5" viewBox="0 0 9 10.5" preserveAspectRatio="none" fill="#333" stroke="none"><path d="M0.5 0.5 H5.9 L8.5 3.1 V10 H0.5 Z" fill="none" stroke="#555" stroke-width="1.0" stroke-linecap="round" stroke-linejoin="miter" /><path d="M5.9 0.5 V3.1 H8.5" fill="none" stroke="#555" stroke-width="0.8" stroke-linecap="round" stroke-linejoin="round" /><path d="M1.9 8.6 C3 7.3 4.1 5.3 4.3 2.6 C4.5 5 5.3 6.5 7.1 7.4 C5.5 7.0 3.9 7.3 2.3 8.0" fill="none" stroke="#555" stroke-width="0.7" stroke-linecap="round" stroke-linejoin="round" /></svg>
<div class="t" style="left:189.6px;top:191px;">c.pdf</div>
<svg style="left:270.6px;top:191.57999999999998px;" width="8.9" height="8.2" viewBox="0 0 8.9 8.2" preserveAspectRatio="none" fill="#333" stroke="none"><rect x="0.65" y="0.65" width="7.6" height="6.9" rx="1.4" fill="none" stroke="#555" stroke-width="1.3"/><path d="M2.4 2.9 H6.5 L4.45 5.7 Z" fill="#555" /></svg>
<div class="t" style="left:291.6px;top:191px;">PDF file</div>
<div class="t" style="left:406.8px;top:191px;">1014.21 KB</div>
<div class="t" style="left:521.8px;top:191px;">4/28/2025, 3:53:46 PM</div>
<div class="t" style="left:636.4px;top:191px;">Standard</div>
<div class="a" style="left:156px;top:206.35px;width:592px;height:18.47px;background:#f8f8f8;"></div>
<div class="a cb" style="left:159.5px;top:210.55px"></div>
<svg style="left:176.1px;top:209.54999999999998px;" width="9.0" height="10.5" viewBox="0 0 9 10.5" preserveAspectRatio="none" fill="#333" stroke="none"><path d="M0.5 0.5 H5.9 L8.5 3.1 V10 H0.5 Z" fill="none" stroke="#555" stroke-width="1.0" stroke-linecap="round" stroke-linejoin="miter" /><path d="M5.9 0.5 V3.1 H8.5" fill="none" stroke="#555" stroke-width="0.8" stroke-linecap="round" stroke-linejoin="round" /><path d="M1.9 8.6 C3 7.3 4.1 5.3 4.3 2.6 C4.5 5 5.3 6.5 7.1 7.4 C5.5 7.0 3.9 7.3 2.3 8.0" fill="none" stroke="#555" stroke-width="0.7" stroke-linecap="round" stroke-linejoin="round" /></svg>
<div class="t" style="left:189.6px;top:210px;">d.pdf</div>
<svg style="left:270.6px;top:210.04999999999998px;" width="8.9" height="8.2" viewBox="0 0 8.9 8.2" preserveAspectRatio="none" fill="#333" stroke="none"><rect x="0.65" y="0.65" width="7.6" height="6.9" rx="1.4" fill="none" stroke="#555" stroke-width="1.3"/><path d="M2.4 2.9 H6.5 L4.45 5.7 Z" fill="#555" /></svg>
<div class="t" style="left:291.6px;top:210px;">PDF file</div>
<div class="t" style="left:406.8px;top:210px;">1014.21 KB</div>
<div class="t" style="left:521.8px;top:210px;">4/28/2025, 3:53:46 PM</div>
<div class="t" style="left:636.4px;top:210px;">Standard</div>
<div class="a cb" style="left:159.5px;top:229.02px"></div>
<svg style="left:176.1px;top:228.01999999999998px;" width="9.0" height="10.5" viewBox="0 0 9 10.5" preserveAspectRatio="none" fill="#333" stroke="none"><path d="M0.5 0.5 H5.9 L8.5 3.1 V10 H0.5 Z" fill="none" stroke="#555" stroke-width="1.0" stroke-linecap="round" stroke-linejoin="miter" /><path d="M5.9 0.5 V3.1 H8.5" fill="none" stroke="#555" stroke-width="0.8" stroke-linecap="round" stroke-linejoin="round" /><path d="M1.9 8.6 C3 7.3 4.1 5.3 4.3 2.6 C4.5 5 5.3 6.5 7.1 7.4 C5.5 7.0 3.9 7.3 2.3 8.0" fill="none" stroke="#555" stroke-width="0.7" stroke-linecap="round" stroke-linejoin="round" /></svg>
<div class="t" style="left:189.6px;top:228px;">e.pdf</div>
<svg style="left:270.6px;top:228.51999999999998px;" width="8.9" height="8.2" viewBox="0 0 8.9 8.2" preserveAspectRatio="none" fill="#333" stroke="none"><rect x="0.65" y="0.65" width="7.6" height="6.9" rx="1.4" fill="none" stroke="#555" stroke-width="1.3"/><path d="M2.4 2.9 H6.5 L4.45 5.7 Z" fill="#555" /></svg>
<div class="t" style="left:291.6px;top:228px;">PDF file</div>
<div class="t" style="left:406.8px;top:228px;">1014.21 KB</div>
<div class="t" style="left:521.8px;top:228px;">4/28/2025, 3:53:46 PM</div>
<div class="t" style="left:636.4px;top:228px;">Standard</div>
<div class="a" style="left:156px;top:243.29px;width:592px;height:18.47px;background:#f8f8f8;"></div>
<div class="a cb" style="left:159.5px;top:247.49px"></div>
<svg style="left:176.1px;top:246.48999999999998px;" width="9.0" height="10.5" viewBox="0 0 9 10.5" preserveAspectRatio="none" fill="#333" stroke="none"><path d="M0.5 0.5 H5.9 L8.5 3.1 V10 H0.5 Z" fill="none" stroke="#555" stroke-width="1.0" stroke-linecap="round" stroke-linejoin="miter" /><path d="M5.9 0.5 V3.1 H8.5" fill="none" stroke="#555" stroke-width="0.8" stroke-linecap="round" stroke-linejoin="round" /><path d="M1.9 8.6 C3 7.3 4.1 5.3 4.3 2.6 C4.5 5 5.3 6.5 7.1 7.4 C5.5 7.0 3.9 7.3 2.3 8.0" fill="none" stroke="#555" stroke-width="0.7" stroke-linecap="round" stroke-linejoin="round" /></svg>
<div class="t" style="left:189.6px;top:247px;">f.pdf</div>
<svg style="left:270.6px;top:246.98999999999998px;" width="8.9" height="8.2" viewBox="0 0 8.9 8.2" preserveAspectRatio="none" fill="#333" stroke="none"><rect x="0.65" y="0.65" width="7.6" height="6.9" rx="1.4" fill="none" stroke="#555" stroke-width="1.3"/><path d="M2.4 2.9 H6.5 L4.45 5.7 Z" fill="#555" /></svg>
<div class="t" style="left:291.6px;top:247px;">PDF file</div>
<div class="t" style="left:406.8px;top:247px;">1014.21 KB</div>
<div class="t" style="left:521.8px;top:247px;">4/28/2025, 3:53:46 PM</div>
<div class="t" style="left:636.4px;top:247px;">Standard</div>
<div class="a cb" style="left:159.5px;top:265.96px"></div>
<svg style="left:176.1px;top:264.96px;" width="9.0" height="10.5" viewBox="0 0 9 10.5" preserveAspectRatio="none" fill="#333" stroke="none"><path d="M0.5 0.5 H5.9 L8.5 3.1 V10 H0.5 Z" fill="none" stroke="#555" stroke-width="1.0" stroke-linecap="round" stroke-linejoin="miter" /><path d="M5.9 0.5 V3.1 H8.5" fill="none" stroke="#555" stroke-width="0.8" stroke-linecap="round" stroke-linejoin="round" /><path d="M1.9 8.6 C3 7.3 4.1 5.3 4.3 2.6 C4.5 5 5.3 6.5 7.1 7.4 C5.5 7.0 3.9 7.3 2.3 8.0" fill="none" stroke="#555" stroke-width="0.7" stroke-linecap="round" stroke-linejoin="round" /></svg>
<div class="t" style="left:189.6px;top:265px;">g.pdf</div>
<svg style="left:270.6px;top:265.46px;" width="8.9" height="8.2" viewBox="0 0 8.9 8.2" preserveAspectRatio="none" fill="#333" stroke="none"><rect x="0.65" y="0.65" width="7.6" height="6.9" rx="1.4" fill="none" stroke="#555" stroke-width="1.3"/><path d="M2.4 2.9 H6.5 L4.45 5.7 Z" fill="#555" /></svg>
<div class="t" style="left:291.6px;top:265px;">PDF file</div>
<div class="t" style="left:406.8px;top:265px;">1014.21 KB</div>
<div class="t" style="left:521.8px;top:265px;">4/28/2025, 3:49:46 PM</div>
<div class="t" style="left:636.4px;top:265px;">Standard</div>
<div class="a" style="left:156px;top:280.23px;width:592px;height:18.47px;background:#f8f8f8;"></div>
<div class="a cb" style="left:159.5px;top:284.43px"></div>
<svg style="left:176.1px;top:283.43px;" width="9.0" height="10.5" viewBox="0 0 9 10.5" preserveAspectRatio="none" fill="#333" stroke="none"><path d="M0.5 0.5 H5.9 L8.5 3.1 V10 H0.5 Z" fill="none" stroke="#555" stroke-width="1.0" stroke-linecap="round" stroke-linejoin="miter" /><path d="M5.9 0.5 V3.1 H8.5" fill="none" stroke="#555" stroke-width="0.8" stroke-linecap="round" stroke-linejoin="round" /><path d="M1.9 8.6 C3 7.3 4.1 5.3 4.3 2.6 C4.5 5 5.3 6.5 7.1 7.4 C5.5 7.0 3.9 7.3 2.3 8.0" fill="none" stroke="#555" stroke-width="0.7" stroke-linecap="round" stroke-linejoin="round" /></svg>
<div class="t" style="left:189.6px;top:284px;">h.pdf</div>
<svg style="left:270.6px;top:283.93px;" width="8.9" height="8.2" viewBox="0 0 8.9 8.2" preserveAspectRatio="none" fill="#333" stroke="none"><rect x="0.65" y="0.65" width="7.6" height="6.9" rx="1.4" fill="none" stroke="#555" stroke-width="1.3"/><path d="M2.4 2.9 H6.5 L4.45 5.7 Z" fill="#555" /></svg>
<div class="t" style="left:291.6px;top:284px;">PDF file</div>
<div class="t" style="left:406.8px;top:284px;">1014.21 KB</div>
<div class="t" style="left:521.8px;top:284px;">4/28/2025, 3:49:46 PM</div>
<div class="t" style="left:636.4px;top:284px;">Standard</div>
<div class="a cb" style="left:159.5px;top:302.9px"></div>
<svg style="left:176.1px;top:301.9px;" width="9.0" height="10.5" viewBox="0 0 9 10.5" preserveAspectRatio="none" fill="#333" stroke="none"><path d="M0.5 0.5 H5.9 L8.5 3.1 V10 H0.5 Z" fill="none" stroke="#555" stroke-width="1.0" stroke-linecap="round" stroke-linejoin="miter" /><path d="M5.9 0.5 V3.1 H8.5" fill="none" stroke="#555" stroke-width="0.8" stroke-linecap="round" stroke-linejoin="round" /><path d="M1.9 8.6 C3 7.3 4.1 5.3 4.3 2.6 C4.5 5 5.3 6.5 7.1 7.4 C5.5 7.0 3.9 7.3 2.3 8.0" fill="none" stroke="#555" stroke-width="0.7" stroke-linecap="round" stroke-linejoin="round" /></svg>
<div class="t" style="left:189.6px;top:302px;">i.pdf</div>
<svg style="left:270.6px;top:302.4px;" width="8.9" height="8.2" viewBox="0 0 8.9 8.2" preserveAspectRatio="none" fill="#333" stroke="none"><rect x="0.65" y="0.65" width="7.6" height="6.9" rx="1.4" fill="none" stroke="#555" stroke-width="1.3"/><path d="M2.4 2.9 H6.5 L4.45 5.7 Z" fill="#555" /></svg>
<div class="t" style="left:291.6px;top:302px;">PDF file</div>
<div class="t" style="left:406.8px;top:302px;">1014.21 KB</div>
<div class="t" style="left:521.8px;top:302px;">4/28/2025, 3:49:46 PM</div>
<div class="t" style="left:636.4px;top:302px;">Standard</div>
<div class="a" style="left:156px;top:317.17px;width:592px;height:18.47px;background:#f8f8f8;"></div>
<div class="a cb" style="left:159.5px;top:321.37px"></div>
<svg style="left:176.1px;top:320.36999999999995px;" width="9.0" height="10.5" viewBox="0 0 9 10.5" preserveAspectRatio="none" fill="#333" stroke="none"><path d="M0.5 0.5 H5.9 L8.5 3.1 V10 H0.5 Z" fill="none" stroke="#555" stroke-width="1.0" stroke-linecap="round" stroke-linejoin="miter" /><path d="M5.9 0.5 V3.1 H8.5" fill="none" stroke="#555" stroke-width="0.8" stroke-linecap="round" stroke-linejoin="round" /><path d="M1.9 8.6 C3 7.3 4.1 5.3 4.3 2.6 C4.5 5 5.3 6.5 7.1 7.4 C5.5 7.0 3.9 7.3 2.3 8.0" fill="none" stroke="#555" stroke-width="0.7" stroke-linecap="round" stroke-linejoin="round" /></svg>
<div class="t" style="left:189.6px;top:321px;">j.pdf</div>
<svg style="left:270.6px;top:320.86999999999995px;" width="8.9" height="8.2" viewBox="0 0 8.9 8.2" preserveAspectRatio="none" fill="#333" stroke="none"><rect x="0.65" y="0.65" width="7.6" height="6.9" rx="1.4" fill="none" stroke="#555" stroke-width="1.3"/><path d="M2.4 2.9 H6.5 L4.45 5.7 Z" fill="#555" /></svg>
<div class="t" style="left:291.6px;top:321px;">PDF file</div>
<div class="t" style="left:406.8px;top:321px;">1014.21 KB</div>
<div class="t" style="left:521.8px;top:321px;">4/28/2025, 3:49:46 PM</div>
<div class="t" style="left:636.4px;top:321px;">Standard</div>
<div class="a" style="left:156px;top:114px;width:592px;height:18.5px;border:1px solid #d3eac3"></div>
<div class="a" style="left:156px;top:342px;width:592px;height:1.2px;background:#e2e2e2;"></div>
<svg style="left:165.3px;top:352.0px;" width="7.0" height="8.4" viewBox="0 0 7 8.2" preserveAspectRatio="none" fill="#333" stroke="none"><path d="M0 0 H1.8 V8.2 H0 Z M7 0 V8.2 L1.8 4.1 Z" fill="#777" /></svg>
<svg style="left:183.5px;top:352.0px;" width="9.5" height="8.4" viewBox="0 0 9.5 8.2" preserveAspectRatio="none" fill="#333" stroke="none"><path d="M4.75 0 V8.2 L0 4.1 Z M9.5 0 V8.2 L4.75 4.1 Z" fill="#777" /></svg>
<svg style="left:201.7px;top:352.0px;" width="9.4" height="8.4" viewBox="0 0 9.5 8.2" preserveAspectRatio="none" fill="#333" stroke="none"><path d="M0 0 V8.2 L4.75 4.1 Z M4.75 0 V8.2 L9.5 4.1 Z" fill="#777" /></svg>
<svg style="left:222.8px;top:352.0px;" width="7.2" height="8.4" viewBox="0 0 7 8.2" preserveAspectRatio="none" fill="#333" stroke="none"><path d="M7 0 H5.2 V8.2 H7 Z M0 0 V8.2 L5.2 4.1 Z" fill="#777" /></svg>
<div class="t" style="left:241.4px;top:352px;">Showing all 12 items</div>
<svg style="left:729.9px;top:353.4px;" width="10.8" height="8.2" viewBox="0 0 10.8 8.2" preserveAspectRatio="none" fill="#333" stroke="none"><rect x="0.45" y="0.45" width="9.9" height="7.3" rx="1" fill="#e4e4e4" stroke="#4a4a4a" stroke-width="0.9"/><path d="M0 1 Q0 0 1 0 H9.8 Q10.8 0 10.8 1 V1.9 H0 Z" fill="#111" /><path d="M2.7 2.5 H8.1 V7.3 H2.7 Z" fill="#9c9c9c" /><path d="M2.9 4.4 H7.9 V5.1 H2.9 Z" fill="#777" /></svg>
<div class="a" style="left:758px;top:40px;width:143px;height:26px;background:#d1d1d1;"></div>
<svg style="left:769.0px;top:47.3px;" width="10.0" height="11.3" viewBox="0 0 10 11.3" preserveAspectRatio="none" fill="#333" stroke="none"><path d="M0.6 0.6 H6.3 L9.4 3.7 V10.7 H0.6 Z M6.3 0.6 V3.7 H9.4" fill="none" stroke="#555" stroke-width="1.1" stroke-linecap="round" stroke-linejoin="round" /></svg>
<div class="t" style="left:786.0px;top:47px;font-size:11.2px;line-height:12px;">1.pdf</div>
<svg style="left:884.3px;top:50.3px;" width="7.3" height="6.7" viewBox="0 0 7.3 7" preserveAspectRatio="none" fill="#333" stroke="none"><path d="M1 1 L6.3 6 M6.3 1 L1 6" fill="none" stroke="#222" stroke-width="2.0" stroke-linecap="round" stroke-linejoin="round" /></svg>
<svg style="left:765.5px;top:74.6px;" width="9.5" height="9.3" viewBox="0 0 9.5 9.3" preserveAspectRatio="none" fill="#333" stroke="none"><circle cx="3.9" cy="3.9" r="3.3" fill="none" stroke="#888" stroke-width="1.2"/><path d="M6.3 6.3 L8.8 8.8" fill="none" stroke="#888" stroke-width="1.7" stroke-linecap="round" stroke-linejoin="round" /><path d="M2.3 3.9 H5.5 M3.9 2.3 V5.5" fill="none" stroke="#888" stroke-width="1.0" stroke-linecap="butt" stroke-linejoin="round" /></svg>
<div class="t" style="left:777.8px;top:74px;color:#999;">View</div>
<svg style="left:813.8px;top:74.2px;" width="10.4" height="8.6" viewBox="0 0 10 9" preserveAspectRatio="none" fill="#333" stroke="none"><path d="M4 0 H6 V3.6 H8.3 L5 6.9 L1.7 3.6 H4 Z" fill="#222" /><path d="M0 6.1 H3.2 L5 7.9 L6.8 6.1 H10 V9 H0 Z" fill="#222" /></svg>
<svg style="left:882.8px;top:74.8px;" width="9.6" height="8.8" viewBox="0 0 9.6 9.4" preserveAspectRatio="none" fill="#333" stroke="none"><path d="M1.2 3.9 C1.7 2.1 3.2 1.0 4.9 1.0 C6.1 1.0 7.1 1.5 7.8 2.3" fill="none" stroke="#222" stroke-width="1.4" stroke-linecap="butt" stroke-linejoin="round" /><path d="M9.5 0.5 V4.1 H5.9 Z" fill="#222" /><path d="M8.4 5.5 C7.9 7.3 6.4 8.4 4.7 8.4 C3.5 8.4 2.5 7.9 1.8 7.1" fill="none" stroke="#222" stroke-width="1.4" stroke-linecap="butt" stroke-linejoin="round" /><path d="M0.1 8.9 V5.3 H3.7 Z" fill="#222" /></svg>
<div class="a" style="left:758px;top:91.5px;width:143px;height:1.0px;background:#dadada;"></div>
<svg style="left:810.6px;top:111.2px;" width="38.2" height="44.5" viewBox="0 0 38.2 44.5" preserveAspectRatio="none" fill="#333" stroke="none"><path d="M1.35 2.5 Q1.35 1.35 2.5 1.35 H24.5 L36.85 13.7 V42 Q36.85 43.15 35.7 43.15 H2.5 Q1.35 43.15 1.35 42 Z M24.5 1.35 V13.7 H36.85" fill="none" stroke="#d4d4d4" stroke-width="2.7" stroke-linecap="round" stroke-linejoin="round" /></svg>
<div class="t" style="left:790.5px;top:173px;font-size:17.6px;line-height:20px;color:#cfcfcf;">Too Large</div>
<div class="a" style="left:761px;top:342px;width:137.5px;height:1.2px;background:#dcdcdc;"></div>
<div class="t" style="left:767.6px;top:351px;"><b>Size:</b></div>
<div class="t" style="left:794.2px;top:351px;color:#555;">10.13 ...</div>
<svg style="left:841.0px;top:352.3px;" width="9.0" height="8.5" viewBox="0 0 9 8.5" preserveAspectRatio="none" fill="#333" stroke="none"><ellipse cx="4.5" cy="4.25" rx="4.5" ry="4.25" fill="#888"/><path d="M6.6 4.25 H2.6 M4.5 2.2 L2.4 4.25 L4.5 6.3" fill="none" stroke="#f0f0f0" stroke-width="1.3" stroke-linecap="round" stroke-linejoin="round" /></svg>
<svg style="left:861.0px;top:352.3px;" width="10.0" height="8.5" viewBox="0 0 9 8.5" preserveAspectRatio="none" fill="#333" stroke="none"><ellipse cx="4.5" cy="4.25" rx="4.5" ry="4.25" fill="#1a1a1a"/><path d="M2.4 4.25 H6.4 M4.5 2.2 L6.6 4.25 L4.5 6.3" fill="none" stroke="#f0f0f0" stroke-width="1.3" stroke-linecap="round" stroke-linejoin="round" /></svg>
<svg style="left:882.0px;top:352.9px;" width="9.0" height="7.6" viewBox="0 0 9 7.6" preserveAspectRatio="none" fill="#333" stroke="none"><path d="M0 0 H9 V1.6 H0 Z M0 3 H9 V4.6 H0 Z M0 6 H9 V7.6 H0 Z" fill="#222" /></svg>
<div class="a" style="left:153px;top:377px;width:748px;height:26px;background:#d1d1d1;"></div>
<svg style="left:163.8px;top:386.0px;" width="10.6" height="9.8" viewBox="0 0 12.8 10.8" preserveAspectRatio="none" fill="#333" stroke="none"><circle cx="5" cy="4.7" r="3.9" fill="none" stroke="#222" stroke-width="1.6"/><path d="M7.9 7.5 L11.7 10" fill="none" stroke="#222" stroke-width="2.1" stroke-linecap="round" stroke-linejoin="round" /></svg>
<div class="t" style="left:185.6px;top:384px;font-size:11.2px;line-height:12px;">Search Results</div>
<svg style="left:884.3px;top:387.0px;" width="7.3" height="7.1" viewBox="0 0 7.3 7" preserveAspectRatio="none" fill="#333" stroke="none"><path d="M1 1 L6.3 6 M6.3 1 L1 6" fill="none" stroke="#222" stroke-width="2.0" stroke-linecap="round" stroke-linejoin="round" /></svg>
<svg style="left:160.0px;top:412.2px;" width="11.2" height="7.7" viewBox="0 0 11.2 7.7" preserveAspectRatio="none" fill="#333" stroke="none"><path d="M0 1 Q0 0 1 0 H3.4 L4.4 1 H8.3 Q9.2 1 9.2 1.9 V2.6 H2.4 L0 6.6 Z" fill="#7a7a7a" /><path d="M2.6 3.3 H11.2 L8.6 7.7 H0 Z" fill="#7a7a7a" /></svg>
<div class="t" style="left:174.4px;top:411px;color:#8c8c8c;">Open Folder</div>
<svg style="left:245.1px;top:412.0px;" width="10.3" height="8.6" viewBox="0 0 10 9" preserveAspectRatio="none" fill="#333" stroke="none"><path d="M4 0 H6 V3.6 H8.3 L5 6.9 L1.7 3.6 H4 Z" fill="#666" /><path d="M0 6.1 H3.2 L5 7.9 L6.8 6.1 H10 V9 H0 Z" fill="#666" /></svg>
<svg style="left:270.1px;top:411.5px;" width="10.7" height="9.7" viewBox="0 0 10.7 9.7" preserveAspectRatio="none" fill="#333" stroke="none"><path d="M7.8 5.6 V8.3 Q7.8 9.1 7 9.1 H1.4 Q0.6 9.1 0.6 8.3 V2.7 Q0.6 1.9 1.4 1.9 H4.4" fill="none" stroke="#777" stroke-width="1.2" stroke-linecap="round" stroke-linejoin="round" /><path d="M4.6 5.2 L9.6 1.1" fill="none" stroke="#777" stroke-width="1.4" stroke-linecap="round" stroke-linejoin="round" /><path d="M6.4 0 H10.7 V4.3 Z" fill="#777" /></svg>
<svg style="left:296.3px;top:412.4px;" width="8.8" height="8.6" viewBox="0 0 9.7 8.9" preserveAspectRatio="none" fill="#333" stroke="none"><circle cx="1.8" cy="4.45" r="1.8" fill="#666"/><circle cx="7.9" cy="1.8" r="1.8" fill="#666"/><circle cx="7.9" cy="7.1" r="1.8" fill="#666"/><path d="M1.8 4.45 L7.9 1.8 M1.8 4.45 L7.9 7.1" fill="none" stroke="#666" stroke-width="1.2" stroke-linecap="round" stroke-linejoin="round" /></svg>
<svg style="left:321.1px;top:412.0px;" width="9.3" height="9.2" viewBox="0 0 10.1 9.2" preserveAspectRatio="none" fill="#333" stroke="none"><ellipse cx="2.9" cy="2.8" rx="2.4" ry="1.95" transform="rotate(42 2.9 2.8)" fill="none" stroke="#777" stroke-width="1.25"/><ellipse cx="7.2" cy="6.4" rx="2.4" ry="1.95" transform="rotate(42 7.2 6.4)" fill="none" stroke="#777" stroke-width="1.25"/></svg>
<svg style="left:345.2px;top:413.0px;" width="11.1" height="7.6" viewBox="0 0 11.1 7.6" preserveAspectRatio="none" fill="#333" stroke="none"><path d="M0 1.5 H8.2 V0.2 L11.1 2.25 L8.2 4.3 V3.1 H0 Z" fill="#666" /><path d="M11.1 4.8 H2.9 V3.5 L0 5.55 L2.9 7.6 V6.4 H11.1 Z" fill="#666" /></svg>
<svg style="left:371.6px;top:412.2px;" width="8.0" height="9.4" viewBox="0 0 8.9 9.6" preserveAspectRatio="none" fill="#333" stroke="none"><path d="M1.2 2.4 H7.7 L7.2 9.0 Q7.15 9.6 6.6 9.6 H2.3 Q1.75 9.6 1.7 9.0 Z" fill="#cccccc" /><path d="M1.2 2.4 H7.7 L7.2 9.0 Q7.15 9.6 6.6 9.6 H2.3 Q1.75 9.6 1.7 9.0 Z" fill="none" stroke="#8a8a8a" stroke-width="0.9" stroke-linecap="round" stroke-linejoin="round" /><path d="M0.2 2.0 H8.7 M3.0 2.0 V0.6 H5.9 V2.0" fill="none" stroke="#8a8a8a" stroke-width="1.1" stroke-linecap="butt" stroke-linejoin="round" /><path d="M3.2 3.6 V8.2 M5.7 3.6 V8.2" fill="none" stroke="#8a8a8a" stroke-width="0.7" stroke-linecap="round" stroke-linejoin="round" /></svg>
<svg style="left:395.6px;top:412.4px;" width="10.4" height="8.4" viewBox="0 0 11 8.5" preserveAspectRatio="none" fill="#333" stroke="none"><path d="M0 0 H2.9 V2.2 H0 Z M3.9 0 H11 V2.2 H3.9 Z" fill="#666" /><path d="M0 3.15 H2.9 V5.35 H0 Z M3.9 3.15 H11 V5.35 H3.9 Z" fill="#666" /><path d="M0 6.3 H2.9 V8.5 H0 Z M3.9 6.3 H11 V8.5 H3.9 Z" fill="#666" /></svg>
<div class="a" style="left:785px;top:407.5px;width:88.7px;height:19px;background:#fff;border:1.2px solid #d6d6d6;border-radius:3px"></div>
<div class="t" style="left:794.2px;top:412px;color:#999;">Filter</div>
<svg style="left:883.0px;top:412.3px;" width="9.3" height="8.8" viewBox="0 0 9.6 9.4" preserveAspectRatio="none" fill="#333" stroke="none"><path d="M1.2 3.9 C1.7 2.1 3.2 1.0 4.9 1.0 C6.1 1.0 7.1 1.5 7.8 2.3" fill="none" stroke="#666" stroke-width="1.4" stroke-linecap="butt" stroke-linejoin="round" /><path d="M9.5 0.5 V4.1 H5.9 Z" fill="#666" /><path d="M8.4 5.5 C7.9 7.3 6.4 8.4 4.7 8.4 C3.5 8.4 2.5 7.9 1.8 7.1" fill="none" stroke="#666" stroke-width="1.4" stroke-linecap="butt" stroke-linejoin="round" /><path d="M0.1 8.9 V5.3 H3.7 Z" fill="#666" /></svg>
<div class="a" style="left:153px;top:428.7px;width:748px;height:1.0px;background:#dadada;"></div>
<div class="a" style="left:156px;top:432.5px;width:742.8px;height:18.0px;background:#f0f0f0;"></div>
<div class="a" style="left:156px;top:450px;width:742.8px;height:1px;background:#d2d2d2;"></div>
<div class="a" style="left:171.4px;top:432.8px;width:1.2px;height:17.7px;background:#cdcdcd;"></div>
<div class="a" style="left:293.4px;top:432.8px;width:1.2px;height:17.7px;background:#cdcdcd;"></div>
<div class="a" style="left:414.1px;top:432.8px;width:1.2px;height:17.7px;background:#cdcdcd;"></div>
<div class="a" style="left:535.3px;top:432.8px;width:1.2px;height:17.7px;background:#cdcdcd;"></div>
<div class="a" style="left:657.0px;top:432.8px;width:1.2px;height:17.7px;background:#cdcdcd;"></div>
<div class="a" style="left:777.4px;top:432.8px;width:1.2px;height:17.7px;background:#cdcdcd;"></div>
<div class="a" style="left:898px;top:432.5px;width:1px;height:18.0px;background:#d5d5d5;"></div>
<div class="a cb" style="left:159px;top:437.2px"></div>
<div class="t" style="left:176.2px;top:436px;"><i>Title</i></div>
<svg style="left:197.5px;top:442.0px;" width="5.0" height="2.8" viewBox="0 0 5 3" preserveAspectRatio="none" fill="#333" stroke="none"><path d="M0 3 L2.5 0 L5 3 Z" fill="#222" /></svg>
<div class="t" style="left:296.4px;top:436px;">In Folder</div>
<div class="t" style="left:418.4px;top:436px;">Type</div>
<div class="t" style="left:539.0px;top:436px;">Size</div>
<div class="t" style="left:660.4px;top:436px;">Modified</div>
<div class="t" style="left:780.8px;top:436px;">Storage Class</div>
<div class="a" style="left:156px;top:451px;width:742.8px;height:70.6px;background:#fff;"></div>
<div class="a" style="left:153px;top:524px;width:746px;height:1.2px;background:#dcdcdc;"></div>
<svg style="left:165.4px;top:533.8px;" width="7.3" height="8.4" viewBox="0 0 7 8.2" preserveAspectRatio="none" fill="#333" stroke="none"><path d="M0 0 H1.8 V8.2 H0 Z M7 0 V8.2 L1.8 4.1 Z" fill="#777" /></svg>
<svg style="left:183.8px;top:533.8px;" width="8.9" height="8.4" viewBox="0 0 9.5 8.2" preserveAspectRatio="none" fill="#333" stroke="none"><path d="M4.75 0 V8.2 L0 4.1 Z M9.5 0 V8.2 L4.75 4.1 Z" fill="#777" /></svg>
<svg style="left:202.2px;top:533.8px;" width="8.9" height="8.4" viewBox="0 0 9.5 8.2" preserveAspectRatio="none" fill="#333" stroke="none"><path d="M0 0 V8.2 L4.75 4.1 Z M4.75 0 V8.2 L9.5 4.1 Z" fill="#777" /></svg>
<svg style="left:222.6px;top:533.8px;" width="7.1" height="8.4" viewBox="0 0 7 8.2" preserveAspectRatio="none" fill="#333" stroke="none"><path d="M7 0 H5.2 V8.2 H7 Z M0 0 V8.2 L5.2 4.1 Z" fill="#777" /></svg>
<div class="t" style="left:241.6px;top:533px;">Showing all items</div>
<svg style="left:880.8px;top:535.2px;" width="10.8" height="8.2" viewBox="0 0 10.8 8.2" preserveAspectRatio="none" fill="#333" stroke="none"><rect x="0.45" y="0.45" width="9.9" height="7.3" rx="1" fill="#e4e4e4" stroke="#4a4a4a" stroke-width="0.9"/><path d="M0 1 Q0 0 1 0 H9.8 Q10.8 0 10.8 1 V1.9 H0 Z" fill="#111" /><path d="M2.7 2.5 H8.1 V7.3 H2.7 Z" fill="#9c9c9c" /><path d="M2.9 4.4 H7.9 V5.1 H2.9 Z" fill="#777" /></svg>
<div class="a" style="left:0;top:0;width:902px;height:550px;border:1px solid #bacdd4"></div>
</body></html>
